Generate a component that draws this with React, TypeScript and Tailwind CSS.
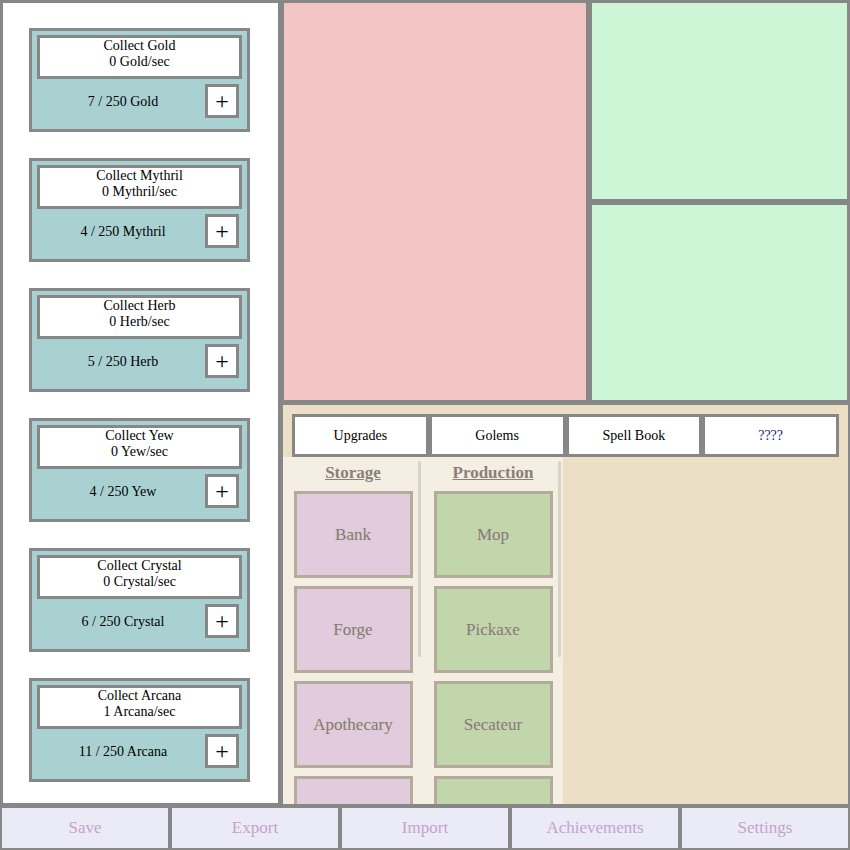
const resources = [
  { name: "Gold", rate: 0, have: 7 },
  { name: "Mythril", rate: 0, have: 4 },
  { name: "Herb", rate: 0, have: 5 },
  { name: "Yew", rate: 0, have: 4 },
  { name: "Crystal", rate: 0, have: 6 },
  { name: "Arcana", rate: 1, have: 11 },
];

const tabs = ["Upgrades", "Golems", "Spell Book", "????"];
const storage = ["Bank", "Forge", "Apothecary", ""];
const production = ["Mop", "Pickaxe", "Secateur", ""];
const footer = ["Save", "Export", "Import", "Achievements", "Settings"];

const ResourceCard = ({ r }: { r: (typeof resources)[number] }) => (
  <div className="flex h-[104px] w-[221px] shrink-0 flex-col border-[3px] border-[#878787] bg-[#aad1d1] px-[5px] pt-[4px]">
    <div className="h-[44px] border-[3px] border-[#878787] bg-white text-center text-[14px] leading-[16px] text-black">
      <div>Collect {r.name}</div>
      <div>
        {r.rate} {r.name}/sec
      </div>
    </div>
    <div className="mt-[5px] flex items-center">
      <div className="flex-1 pl-[4px] text-center text-[14px]">
        {r.have} / 250 {r.name}
      </div>
      <button className="mr-[3px] flex h-[34px] w-[34px] items-center justify-center border-[3px] border-[#878787] bg-white text-[24px] leading-none">
        +
      </button>
    </div>
  </div>
);

const Column = ({
  title,
  items,
  bg,
}: {
  title: string;
  items: string[];
  bg: string;
}) => (
  <div className="relative flex h-full w-[140px] flex-col items-center overflow-hidden bg-[#f5eee3]">
    <div className="mt-[4px] h-[30px] text-[17px] font-bold leading-[24px] text-[#8a8078] underline">
      {title}
    </div>
    <div className="mt-[6px] flex flex-col gap-[8px]">
      {items.map((it, i) => (
        <div
          key={i}
          className={`flex h-[87px] w-[119px] shrink-0 items-center justify-center border-[3px] border-[#b3ab9c] text-[17px] text-[#857b73] [text-shadow:0_0_1px_#d0c8c0] ${bg}`}
        >
          {it}
        </div>
      ))}
    </div>
    <div className="absolute right-[2px] top-[4px] h-[196px] w-[3px] rounded bg-[#d9d2c6]" />
  </div>
);

export default function App() {
  return (
    <div
      className="flex h-[850px] w-[850px] flex-col overflow-hidden bg-white"
      style={{ fontFamily: '"Liberation Serif", serif' }}
    >
      <div className="flex h-[806px]">
        <div className="flex w-[281px] shrink-0 flex-col gap-[26px] border-[3px] border-[#878787] bg-white pl-[26px] pt-[25px]">
          {resources.map((r) => (
            <ResourceCard key={r.name} r={r} />
          ))}
        </div>

        <div className="flex w-[569px] flex-col">
          <div className="flex h-[403px]">
            <div className="w-[308px] border-[3px] border-[#878787] bg-[#f3c5c5]" />
            <div className="flex flex-1 flex-col">
              <div className="h-[202px] border-[3px] border-[#878787] bg-[#cdf6d6]" />
              <div className="flex-1 border-[3px] border-[#878787] bg-[#cdf6d6]" />
            </div>
          </div>

          <div className="flex h-[403px] flex-col border-[2px] border-[#878787] bg-[#ebe0c6]">
            <div className="flex px-[9px] pt-[9px]">
              {tabs.map((t) => (
                <div
                  key={t}
                  className={`flex h-[43px] flex-1 items-center justify-center border-[3px] border-[#878787] bg-white text-[14px] ${
                    t === "????" ? "text-[#1c1c7a]" : "text-black"
                  }`}
                >
                  {t}
                </div>
              ))}
            </div>
            <div className="flex min-h-0 flex-1">
              <Column title="Storage" items={storage} bg="bg-[#e2cbdc]" />
              <Column title="Production" items={production} bg="bg-[#c2d6ab]" />
            </div>
          </div>
        </div>
      </div>

      <div className="flex h-[44px]">
        {footer.map((f) => (
          <button
            key={f}
            className="flex flex-1 items-center justify-center border-[2px] border-[#878787] bg-[#ebebf8] text-[17px] text-[#c8a2c8]"
          >
            {f}
          </button>
        ))}
      </div>
    </div>
  );
}
